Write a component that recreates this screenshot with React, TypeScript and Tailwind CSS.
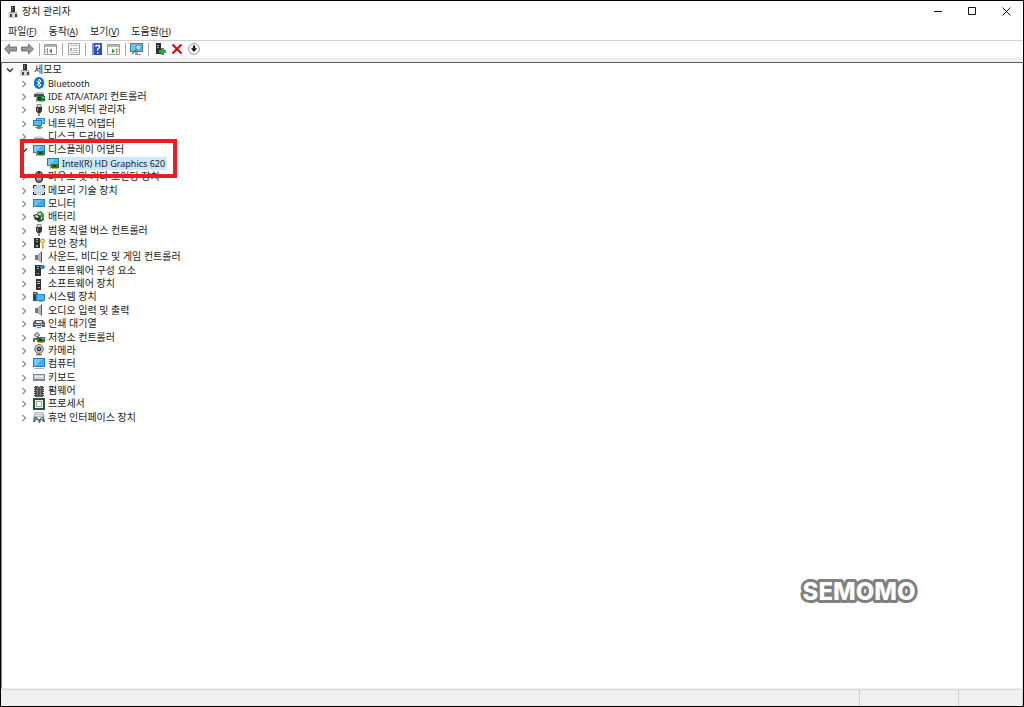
import type { ReactNode } from "react";

function Svg({ children, w = 12, className = "" }: { children: ReactNode; w?: number; className?: string }) {
  return (
    <svg width={w} height="12" viewBox={`0 0 ${w} 12`} aria-hidden="true" className={`block shrink-0 ${className}`}>
      {children}
    </svg>
  );
}

const ComputerRoot = () => (
  <Svg>
    <path d="M4 0h4v7H4z" fill="#333" />
    <path d="M5 1h1v1H5zM5 3h1v1H5z" fill="#aaa" />
    <path d="M2 6h8v1H2z" fill="#999" />
    <path d="M1 7h10v5H1z" fill="#d8d8d8" />
    <path d="M3 8h2v3H3zM8 8h2v3H8z" fill="#444" />
  </Svg>
);

const Bluetooth = () => (
  <Svg>
    <rect x="1" y="0" width="10" height="12" rx="5" fill="#0a78d6" />
    <path d="M3.700 3.800 8 8 6 10V2l2 2-4.300 4.200" fill="none" stroke="#fff" strokeWidth="1" />
  </Svg>
);

const IdeController = () => (
  <Svg>
    <path d="M1 4 3 2h7l1 2z" fill="#c5c5c5" />
    <rect x="1" y="4" width="10" height="3" fill="#4a4a4a" />
    <rect x="4" y="6" width="8" height="5" fill="#1f7a45" />
    <path d="M5 7h3v3H5z" fill="#153b29" />
    <path d="M6 11h5v1H6z" fill="#d8a526" />
    <path d="M9 7h2v1H9z" fill="#7ddc91" />
    <path d="M3 6h1v6H3z" fill="#999" />
  </Svg>
);

const Usb = () => (
  <Svg>
    <path d="M4 .500h4v3H4z" fill="#d5d5d5" stroke="#666" strokeWidth=".7" />
    <path d="M3 3h6v4L7.500 9h-3L3 7z" fill="#333" />
    <path d="M5.300 9h1.400v3H5.300z" fill="#666" />
    <path d="M4 4h1v3H4z" fill="#999" />
  </Svg>
);

const Network = () => (
  <Svg>
    <path d="M3 1h9v6H3z" fill="#2d8bc9" />
    <path d="M4 2h7v4H4z" fill="#63c5f5" />
    <path d="M0 3h9v6H0z" fill="#2382bd" />
    <path d="M1 4h7v4H1z" fill="#58baf0" />
    <path d="M2 10h8v1H2z" fill="#8a9399" />
    <path d="M4 9h4v3H4z" fill="#3fa04c" />
  </Svg>
);

const Disk = () => (
  <Svg>
    <path d="M2 5h8l1 2H1z" fill="#dedede" />
    <path d="M1 7h10v2H1z" fill="#8b8b8b" />
  </Svg>
);

const Display = () => (
  <Svg>
    <rect x="0" y="1" width="12" height="8" fill="#2b7fae" />
    <rect x="1" y="2" width="10" height="6" fill="#48b5ee" />
    <path d="M1 2h7L3 8H1z" fill="#7bcdf6" />
    <path d="M4 7h8v4H4z" fill="#28784a" />
    <path d="M6 8h3v2H6z" fill="#173d2b" />
    <path d="M5 11h6v1H5z" fill="#dba72b" />
    <path d="M3 7h1v5H3z" fill="#999" />
  </Svg>
);

const Mouse = () => (
  <Svg>
    <rect x="2.500" y=".500" width="7" height="11" rx="3.500" fill="#777" stroke="#222" />
    <path d="M4 2h1v3H4zM7 2h1v3H7z" fill="#bbb" />
    <path d="M5.500 1h1v4h-1z" fill="#111" />
    <path d="M4 6h4v3H4z" fill="#aaa" />
  </Svg>
);

const Memory = () => (
  <Svg>
    <rect x="1" y="2" width="10" height="8" fill="#b7d3e8" />
    <path d="M.5 4V1.500h2.500M9 1.500h2.500V4M11.500 8v2.500H9M3 10.500H.5V8" fill="none" stroke="#222" />
    <path d="M3 1.500h6M3 10.500h6M.5 4v4M11.500 4v4" stroke="#8fa2b0" strokeDasharray="1 1" />
    <path d="M2 4h8v4H2z" fill="#c6dcec" />
  </Svg>
);

const Monitor = () => (
  <Svg>
    <rect x="0" y="2" width="12" height="8" fill="#2482bb" />
    <path d="M1 3h10v6H1z" fill="#3daaf0" />
    <path d="M1 3h8L3 9H1z" fill="#62c1f8" />
  </Svg>
);

const Battery = () => (
  <Svg>
    <path d="M4 1 8 0l3 3v5l-3 3H5z" fill="#3b9f43" />
    <path d="M5 2h3v2H5z" fill="#9be68f" />
    <path d="M0 4l4-1 4 3-1 3H2z" fill="#333" />
    <path d="M1 5l3-1 2 2-2 1z" fill="#d5d5d5" />
    <path d="M4 9c3 3 4-1 7 0" fill="none" stroke="#222" />
    <path d="M8 6h1v2H8z" fill="#c8f0c0" />
  </Svg>
);

const Security = () => (
  <Svg>
    <path d="M1 1h6v10H1z" fill="#303030" />
    <path d="M3 2h2v1H3zM3 4h2v1H3z" fill="#aaa" />
    <path d="M3 8h2v2H3z" fill="#5cc65c" />
    <circle cx="9.500" cy="4" r="1.800" fill="#fff2c8" stroke="#d7982c" strokeWidth="1.200" />
    <path d="M9 6h1v6H9zM10 8h1v1h-1zM10 10h1v1h-1z" fill="#d7982c" />
  </Svg>
);

const Sound = () => (
  <Svg>
    <path d="M2 4h3v5H2z" fill="#777" />
    <path d="M5 4 8.500.5v11L5 9z" fill="#b9b9b9" stroke="#888" strokeWidth=".6" />
    <path d="M8 1h1v10H8z" fill="#555" />
  </Svg>
);

const SoftComponent = () => (
  <Svg>
    <path d="M2 1h6v11H2z" fill="#303030" />
    <path d="M4 2h2v1H4zM4 4h2v1H4z" fill="#aaa" />
    <path d="M4 9h2v1H4z" fill="#5cc65c" />
    <path d="M8 1h3v4H8zM7 2h5v2H7z" fill="#2488d8" />
  </Svg>
);

const SoftDevice = () => (
  <Svg>
    <path d="M3 1h5v11H3z" fill="#303030" />
    <path d="M4 3h3v1H4zM4 5h3v1H4z" fill="#bbb" />
    <path d="M5 9h2v1H5z" fill="#64d15f" />
  </Svg>
);

const SystemDevice = () => (
  <Svg>
    <path d="M0 1h4l1 2H3v7H0z" fill="#3d4952" />
    <path d="M1 2h2v1H1z" fill="#ccc" />
    <path d="M3 3h9v7H3z" fill="#2784bc" />
    <path d="M4 4h7v5H4z" fill="#4db7f2" />
    <path d="M6 10h4v1H6z" fill="#8aa" />
  </Svg>
);

const Printer = () => (
  <Svg>
    <path d="M2 2h8l2 3v4H0V5z" fill="#50575c" />
    <path d="M3 3h6v2H3z" fill="#e4e4e4" />
    <path d="M1 6h10v1H1z" fill="#b5bec4" />
    <path d="M3 8h6l1 3H2z" fill="#d9eefb" />
    <path d="M4 9h4v1H4z" fill="#2b93d0" />
  </Svg>
);

const Storage = () => (
  <Svg>
    <path d="M1.500 4 4 1.500 6.500 4 4 6.500z" fill="#ddd" stroke="#333" />
    <path d="M0 7h5v2H2v2H0z" fill="#666" />
    <path d="M4 6h8v5H4z" fill="#24794a" />
    <path d="M6 8h3v2H6z" fill="#153b29" />
    <path d="M9 7h2v1H9z" fill="#7ddc91" />
    <path d="M5 11h6v1H5z" fill="#d8a526" />
  </Svg>
);

const Camera = () => (
  <Svg>
    <circle cx="6" cy="5" r="4.300" fill="#e2e2e2" stroke="#555" />
    <circle cx="6" cy="5" r="2.500" fill="#444" />
    <circle cx="6" cy="5" r="1" fill="#aaa" />
    <path d="M3 11l2-1h2l2 1z" fill="#555" stroke="#555" strokeWidth=".5" />
  </Svg>
);

const Computer = () => (
  <Svg>
    <path d="M0 0h12v9H0z" fill="#2680b6" />
    <path d="M1 1h10v7H1z" fill="#3eaff3" />
    <path d="M1 1h8L3 8H1z" fill="#74caf8" />
    <path d="M1 10h10v1H1z" fill="#9ab3c0" />
  </Svg>
);

const Keyboard = () => (
  <Svg>
    <path d="M0 3h12v7H0z" fill="#7d858a" />
    <path d="M1 4h10v4H1z" fill="#cdd3d7" />
    <path d="M2 5h8v1H2z" fill="#e9ecee" />
  </Svg>
);

const Firmware = () => (
  <Svg>
    <path d="M2 1h8v11H2z" fill="#555" />
    <path d="M1 2h1v1H1zM1 4h1v1H1zM1 6h1v1H1zM1 8h1v1H1zM1 10h1v1H1zM10 2h1v1h-1zM10 4h1v1h-1zM10 6h1v1h-1zM10 8h1v1h-1zM10 10h1v1h-1z" fill="#222" />
    <path d="M4 2h1v9H4zM7 2h1v9H7z" fill="#777" />
    <path d="M5 1h2v1H5z" fill="#ddd" />
  </Svg>
);

const Processor = () => (
  <Svg>
    <path d="M1 1h10v10H1z" fill="#e9eeeb" stroke="#235738" strokeWidth="2" />
    <path d="M3.500 3.500h5v5h-5z" fill="#fff" stroke="#91a99a" />
  </Svg>
);

const Human = () => (
  <Svg>
    <path d="M2 1h8l2 5H0z" fill="#b7bdc2" />
    <path d="M3 2h6v1H3zM2 4h7v1H2z" fill="#e9e9e9" />
    <path d="M0 11 1 6h3l1 2h2l1-2h3l1 5h-2L9 9H8l-1 3H6L5 9H3l-1 2z" fill="#5d6870" />
    <path d="M2 7h2v2H2z" fill="#3292d0" />
    <path d="M8 7h2v1H8z" fill="#ddd" />
  </Svg>
);

function Chevron({ open }: { open?: boolean }) {
  return (
    <svg width="8" height="8" viewBox="0 0 8 8" aria-hidden="true" className="mt-px block shrink-0">
      <path d={open ? "M1 2.500 4 5.500 7 2.500" : "M2.500 1 5.500 4 2.500 7"} fill="none" stroke={open ? "#303030" : "#8b8b8b"} strokeWidth={open ? 1.4 : 1.2} />
    </svg>
  );
}

type Device = { latin?: string; name?: string; icon: () => ReactNode; open?: boolean };

const devices: Device[] = [
  { latin: "Bluetooth", icon: Bluetooth },
  { latin: "IDE ATA/ATAPI", name: " 컨트롤러", icon: IdeController },
  { latin: "USB", name: " 커넥터 관리자", icon: Usb },
  { name: "네트워크 어댑터", icon: Network },
  { name: "디스크 드라이브", icon: Disk },
  { name: "디스플레이 어댑터", icon: Display, open: true },
  { name: "마우스 및 기타 포인팅 장치", icon: Mouse },
  { name: "메모리 기술 장치", icon: Memory },
  { name: "모니터", icon: Monitor },
  { name: "배터리", icon: Battery },
  { name: "범용 직렬 버스 컨트롤러", icon: Usb },
  { name: "보안 장치", icon: Security },
  { name: "사운드, 비디오 및 게임 컨트롤러", icon: Sound },
  { name: "소프트웨어 구성 요소", icon: SoftComponent },
  { name: "소프트웨어 장치", icon: SoftDevice },
  { name: "시스템 장치", icon: SystemDevice },
  { name: "오디오 입력 및 출력", icon: Sound },
  { name: "인쇄 대기열", icon: Printer },
  { name: "저장소 컨트롤러", icon: Storage },
  { name: "카메라", icon: Camera },
  { name: "컴퓨터", icon: Computer },
  { name: "키보드", icon: Keyboard },
  { name: "펌웨어", icon: Firmware },
  { name: "프로세서", icon: Processor },
  { name: "휴먼 인터페이스 장치", icon: Human },
];

const menus = [
  { label: "파일", hotkey: "F" },
  { label: "동작", hotkey: "A" },
  { label: "보기", hotkey: "V" },
  { label: "도움말", hotkey: "H" },
];

function ToolButton({ label, children }: { label: string; children: ReactNode }) {
  return (
    <button type="button" aria-label={label} className="flex h-4 w-[17px] items-center justify-center">
      {children}
    </button>
  );
}

const Separator = () => <span className="ml-[3px] mr-[2px] h-[13px] w-px bg-[#a8a8a8]" />;

function Arrow({ flip }: { flip?: boolean }) {
  return (
    <Svg w={13}>
      <path d={flip ? "M12.500 6 7.500 1v3H.5v4h7v3z" : "M.5 6 5.500 1v3h7v4h-7v3z"} fill="#9a9a9a" stroke="#6a6a6a" strokeWidth=".9" />
    </Svg>
  );
}

function PanelIcon({ flip }: { flip?: boolean }) {
  return (
    <Svg w={13}>
      <path d="M.5 1.500h12v10H.5z" fill="#fff" stroke="#9a9ea2" />
      <path d="M1 2h11v2H1z" fill="#aeb6bd" />
      <path d={flip ? "M9.500 5v6" : "M3.500 5v6"} stroke="#9a9ea2" />
      <path d={flip ? "M5 5.500v5L8 8z" : "M8 5.500v5L5 8z"} fill="#3b9c3b" />
      <path d={flip ? "M10 6.500h2M10 8.500h2" : "M1 6.500h2M1 8.500h2"} stroke="#b3bac0" />
    </Svg>
  );
}

function Toolbar() {
  return (
    <div role="toolbar" aria-label="도구 모음" className="flex h-[16px] shrink-0 items-center pl-px">
      <ToolButton label="뒤로"><Arrow /></ToolButton>
      <ToolButton label="앞으로"><Arrow flip /></ToolButton>
      <Separator />
      <ToolButton label="콘솔 트리 표시"><PanelIcon /></ToolButton>
      <Separator />
      <ToolButton label="속성">
        <Svg>
          <path d="M.5.5h11v11H.5z" fill="#fafafa" stroke="#9aa0a5" />
          <path d="M2 2.500h8M5 5.500h5M5 7.500h5M2 9.500h8" stroke="#b8bec3" />
          <path d="M2 5h2v3H2z" fill="#8fb4cc" />
        </Svg>
      </ToolButton>
      <Separator />
      <ToolButton label="도움말">
        <Svg>
          <path d="M1 0h10v12H1z" fill="#2b50b5" />
          <path d="M1 0h2v12H1z" fill="#8294c7" />
          <path d="M5 4V2.500h3.500v2L6.700 6v1.700" fill="none" stroke="#fff" strokeWidth="1.300" />
          <path d="M6 9h1.500v1.500H6z" fill="#fff" />
        </Svg>
      </ToolButton>
      <ToolButton label="작업 창 표시"><PanelIcon flip /></ToolButton>
      <Separator />
      <ToolButton label="하드웨어 변경 사항 검색">
        <Svg w={13}>
          <path d="M0 0h13v9H0z" fill="#3387b9" />
          <path d="M1 1h11v7H1z" fill="#6cc2ed" />
          <path d="M5 9h3v2H5z" fill="#9aa7ae" />
          <circle cx="8.500" cy="4.500" r="2.700" fill="#bbe5fa" stroke="#507d99" />
          <path d="M6.500 6.500 2 11" stroke="#59707e" strokeWidth="1.300" />
          <path d="M5 11.500h6" stroke="#999" />
        </Svg>
      </ToolButton>
      <Separator />
      <ToolButton label="드라이버 업데이트">
        <Svg>
          <path d="M2 0h5v11H2z" fill="#303030" />
          <path d="M3 2h2v1H3zM3 4h2v1H3z" fill="#aaa" />
          <path d="M7 5h3v2h2v3h-2v2H7v-2H5V7h2z" fill="#32a33b" />
        </Svg>
      </ToolButton>
      <ToolButton label="디바이스 제거">
        <Svg><path d="M1.500 1.500 10.500 10.500M10.500 1.500 1.500 10.500" stroke="#d40d12" strokeWidth="2.200" /></Svg>
      </ToolButton>
      <ToolButton label="디바이스 사용 안 함">
        <Svg>
          <circle cx="6" cy="6" r="5.400" fill="#fff" stroke="#888" strokeWidth=".9" />
          <path d="M6 2.500v3" stroke="#111" strokeWidth="2.200" />
          <path d="M2.800 5.300h6.400L6 9z" fill="#111" />
        </Svg>
      </ToolButton>
    </div>
  );
}

function DeviceRow({ device }: { device: Device }) {
  const Icon = device.icon;
  return (
    <div role="treeitem" aria-expanded={!!device.open} className="flex items-center pl-[18px]">
      <Chevron open={device.open} />
      <span className="ml-[5px]"><Icon /></span>
      <span className="ml-[3px] whitespace-pre">
        {device.latin && <span className="text-[9px]">{device.latin}</span>}
        {device.name}
      </span>
    </div>
  );
}

export default function App() {
  const split = devices.findIndex((d) => d.open) + 1;
  return (
    <div className="flex min-h-screen flex-col border border-black bg-white font-['Noto_Sans','Noto_Sans_CJK_KR',sans-serif] text-[10px] leading-[13px] text-[#1a1a1a]">
      <header className="flex h-[21px] shrink-0 items-center pl-[6px]">
        <ComputerRoot />
        <h1 className="ml-[3px]">장치 관리자</h1>
        <div className="ml-auto flex">
          <button type="button" aria-label="최소화" className="flex h-5 w-[34px] items-center justify-center">
            <svg width="9" height="9"><path d="M0 4.500h8" stroke="#111" /></svg>
          </button>
          <button type="button" aria-label="최대화" className="flex h-5 w-[34px] items-center justify-center">
            <svg width="9" height="9"><path d="M.5.5h7v7h-7z" fill="none" stroke="#111" /></svg>
          </button>
          <button type="button" aria-label="닫기" className="flex h-5 w-[34px] items-center justify-center">
            <svg width="9" height="9"><path d="m.5.5 8 8m0-8-8 8" stroke="#111" /></svg>
          </button>
        </div>
      </header>
      <nav aria-label="메뉴" className="flex h-[19px] shrink-0 items-center gap-[12px] border-b border-[#d0d0d0] pl-[7px]">
        {menus.map((m) => (
          <button type="button" key={m.label}>
            {m.label}<span className="text-[9px]">(<u>{m.hotkey}</u>)</span>
          </button>
        ))}
      </nav>
      <Toolbar />
      <div className="h-[6px] shrink-0 border-b border-[#5c5c5c] bg-[#f0f0f0]" />
      <main className="relative grow border-x border-b border-b-[#f0f0f0] border-l-[#8a8a8a] border-r-[#e3e3e3]">
        <div role="tree" aria-label="장치" className="grid h-[361px] auto-rows-fr">
          <div role="treeitem" aria-expanded="true" className="flex items-center pl-[4px]">
            <Chevron open />
            <span className="ml-[5px]"><ComputerRoot /></span>
            <span className="ml-[3px]">세모모</span>
          </div>
          {devices.slice(0, split).map((d) => <DeviceRow key={d.latin ?? d.name} device={d} />)}
          <div role="treeitem" aria-selected="true" className="flex items-center pl-[45px]">
            <Display />
            <span className="ml-px bg-[#cce8ff] px-[2px] text-[9px]">Intel(R) HD Graphics 620</span>
          </div>
          {devices.slice(split).map((d) => <DeviceRow key={d.latin ?? d.name} device={d} />)}
        </div>
        <div className="absolute left-[18px] top-[76px] h-[39px] w-[157px] border-4 border-[#ec1c24]" />
        <svg role="img" aria-label="SEMOMO" width="124" height="32" className="absolute right-[101px] top-[513px] font-['Inter',sans-serif] text-[24px] font-extrabold">
          <text x="62" y="24" textAnchor="middle" fill="#fff" stroke="#808080" strokeWidth="6" strokeLinejoin="round" paintOrder="stroke">SEMOMO</text>
        </svg>
      </main>
      <footer className="flex h-[17px] shrink-0 border-t border-[#d7d7d7] bg-[#f0f0f0]">
        <div className="grow border-r border-[#d0d0d0]" />
        <div className="w-[99px] border-r border-[#d0d0d0]" />
        <div className="w-[64px] border-r border-[#d0d0d0]" />
      </footer>
    </div>
  );
}
